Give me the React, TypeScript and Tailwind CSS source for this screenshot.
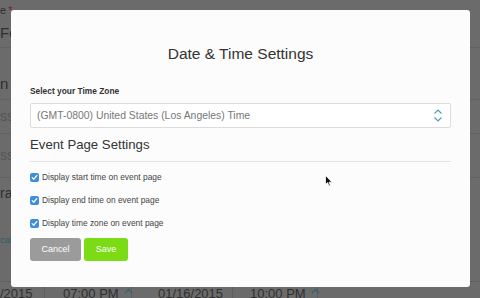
import React from "react";

function Caret() {
  return (
    <svg width="9" height="6" viewBox="0 0 9 6" fill="none" className="mb-[6px] shrink-0">
      <path d="M1 5 L4.5 1.5 L8 5" stroke="#2b6870" strokeWidth="1.4" />
    </svg>
  );
}

// Rows of the page that sits behind the dimmed overlay
function BackgroundPage() {
  return (
    <div className="flex w-full flex-col text-[#2f2f2f]">
      <div className="flex h-[20px] shrink-0 items-center text-[11px] leading-none">
        e<span className="ml-[2px] text-[#7a1f2a]">*</span>
      </div>
      <div className="flex h-[28px] shrink-0 items-center border-b border-[#616161] text-[15px]">Fe</div>
      <div className="h-[22px] shrink-0" />
      <div className="flex h-[30px] shrink-0 items-center border-b border-[#616161] text-[15px]">n 0</div>
      <div className="flex h-[34px] shrink-0 items-center border-b border-[#616161] text-[14px] text-[#555]">ss</div>
      <div className="flex h-[44px] shrink-0 items-center border-b border-[#616161] text-[14px] text-[#555]">ss</div>
      <div className="flex h-[30px] shrink-0 items-center text-[14px]">rar</div>
      <div className="h-[20px] shrink-0" />
      <div className="flex h-[26px] shrink-0 items-center text-[9px] text-[#2b5f66]">cati</div>
      <div className="h-[28px] shrink-0 border-b border-[#616161]" />
      <div className="flex h-[24px] shrink-0 items-center whitespace-nowrap text-[13px]">
        <div className="flex h-full w-[45px] shrink-0 items-center border-r border-[#5e5e5e]">/2015</div>
        <div className="flex h-full w-[87px] shrink-0 items-center gap-[5px] border-r border-[#5e5e5e] pl-[18px]">
          <span>07:00 PM</span>
          <Caret />
        </div>
        <div className="flex h-full w-[101px] shrink-0 items-center border-r border-[#5e5e5e] pl-[26px]">01/16/2015</div>
        <div className="flex h-full w-[85px] shrink-0 items-center gap-[5px] border-r border-[#5e5e5e] pl-[17px]">
          <span>10:00 PM</span>
          <Caret />
        </div>
      </div>
    </div>
  );
}

function CheckRow({ label }: { label: string }) {
  return (
    <label className="flex h-[12px] items-center gap-[3px] text-[8.4px] leading-[12px] text-[#444]">
      <span className="flex h-[9px] w-[9px] items-center justify-center rounded-[2px] bg-[#3d8fdc]">
        <svg width="7" height="7" viewBox="0 0 7 7" fill="none">
          <path d="M1.2 3.6 L2.8 5.2 L5.8 1.6" stroke="white" strokeWidth="1.3" strokeLinecap="round" strokeLinejoin="round" />
        </svg>
      </span>
      {label}
    </label>
  );
}

function DateTimeModal() {
  return (
    <div className="absolute left-[11px] top-[10px] flex h-[277px] w-[459px] flex-col rounded-[3px] bg-[#fcfcfc] px-[19px] pt-[34px]">
      <h2 className="text-center text-[15.5px] leading-[20px] text-[#333]">Date &amp; Time Settings</h2>

      <div className="mt-[21px] text-[8.4px] font-bold leading-[12px] text-[#333]">Select your Time Zone</div>
      <div className="mt-[6px] flex h-[25px] items-center justify-between rounded-[2px] border border-[#dcdcdc] bg-white pl-[6px] pr-[7px]">
        <span className="text-[10.4px] text-[#777]">(GMT-0800) United States (Los Angeles) Time</span>
        <svg width="10" height="15" viewBox="0 0 10 15" fill="none">
          <path d="M1.5 5.5 L5 2 L8.5 5.5" stroke="#4a9fb5" strokeWidth="1.2" />
          <path d="M1.5 9.5 L5 13 L8.5 9.5" stroke="#4a9fb5" strokeWidth="1.2" />
        </svg>
      </div>

      <h3 className="mt-[8px] text-[13.2px] leading-[18px] text-[#333]">Event Page Settings</h3>
      <div className="mt-[7px] border-t border-[#e3e3e3]" />

      <div className="mt-[9px] flex flex-col gap-[11px]">
        <CheckRow label="Display start time on event page" />
        <CheckRow label="Display end time on event page" />
        <CheckRow label="Display time zone on event page" />
      </div>

      <div className="mt-[9px] flex gap-[3px]">
        <button className="h-[23px] w-[51px] rounded-[3px] bg-[#9b9b9b] text-[9px] text-white">Cancel</button>
        <button className="h-[23px] w-[44px] rounded-[3px] bg-[#7bdb14] text-[9px] text-white">Save</button>
      </div>
    </div>
  );
}

export default function App() {
  return (
    <div className="relative h-[298px] w-[480px] overflow-hidden bg-[#6b6b6b] font-['Liberation_Sans',Arial,sans-serif]">
      <BackgroundPage />
      <DateTimeModal />

      {/* mouse pointer */}
      <svg className="absolute left-[325px] top-[175px]" width="8" height="12" viewBox="0 0 8 12">
        <path d="M0.5 0.5 L0.5 9.5 L2.6 7.6 L4 11 L5.4 10.4 L4 7.2 L7 7.2 Z" fill="#111" stroke="white" strokeWidth="0.8" />
      </svg>
    </div>
  );
}
